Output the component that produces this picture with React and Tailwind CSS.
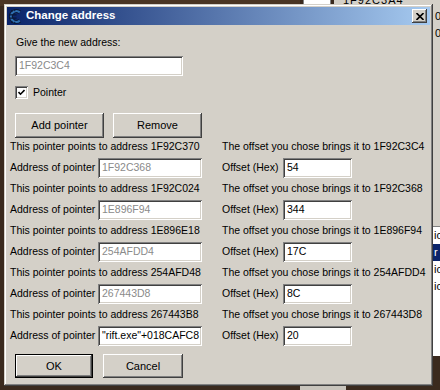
import React from "react";

const rows = [
  { points: "1F92C370", addr: "1F92C368", brings: "1F92C3C4", off: "54" },
  { points: "1F92C024", addr: "1E896F94", brings: "1F92C368", off: "344" },
  { points: "1E896E18", addr: "254AFDD4", brings: "1E896F94", off: "17C" },
  { points: "254AFD48", addr: "267443D8", brings: "254AFDD4", off: "8C" },
  { points: "267443B8", addr: '"rift.exe"+018CAFC8', brings: "267443D8", off: "20", enabled: true },
];

const raised =
  "bg-[#d4d0c8] shadow-[inset_-1px_-1px_#404040,inset_1px_1px_#ffffff,inset_-2px_-2px_#808080,inset_2px_2px_#d4d0c8]";
const sunken =
  "bg-white shadow-[inset_1px_1px_#808080,inset_-1px_-1px_#ffffff,inset_2px_2px_#404040,inset_-2px_-2px_#d4d0c8]";

function Field({ value, disabled, className = "" }) {
  return (
    <div
      className={`${sunken} h-[20px] flex items-center pl-[4px] whitespace-nowrap overflow-hidden ${
        disabled ? "text-[#8a8a8a]" : "text-black"
      } ${className}`}
    >
      {value}
    </div>
  );
}

function Button({ children, className = "" }) {
  return (
    <div className={`${raised} flex items-center justify-center text-black ${className}`}>
      {children}
    </div>
  );
}

export default function App() {
  return (
    <div
      className="relative w-[440px] h-[390px] overflow-hidden bg-[#3a2a1e]"
      style={{ fontFamily: '"Liberation Sans", Arial, sans-serif' }}
    >
      {/* what is behind the dialog */}
      <div className="absolute left-0 top-0 w-[300px] h-[6px] bg-[#4a3524]" />
      <div className="absolute left-[303px] top-0 w-[28px] h-[6px] bg-white border-x border-[#808080]" />
      <div className="absolute left-[334px] top-0 w-[106px] h-[230px] bg-[#d4d0c8]" />
      <div className="absolute left-[343px] top-[-6px] text-[11px] leading-[12px] text-black tracking-[1px]">1F92C3A4</div>
      <div className="absolute left-[435px] top-[10px] text-[11px] leading-[13px] text-black">
        0<br />
        <span className="block mt-[4px]">0</span>
      </div>
      <div className="absolute left-[432px] top-[226px] w-[8px] h-[130px] bg-white border-t border-[#808080] text-[11px] leading-[17px] text-black pl-[2px]">
        io
        <div className="bg-[#0a246a] text-white -ml-[2px] pl-[2px]">r</div>
        io
        <br />
        io
      </div>
      <div className="absolute left-[300px] top-[384px] w-[46px] h-[6px] bg-[#c8c4bc]" />

      {/* dialog */}
      <div
        className="absolute left-[4px] top-[4px] w-[429px] h-[382px] p-[3px] bg-[#d4d0c8] shadow-[inset_-1px_-1px_#404040,inset_1px_1px_#d4d0c8,inset_-2px_-2px_#808080,inset_2px_2px_#ffffff] text-[10.5px] text-black"
      >
        {/* title bar */}
        <div className="h-[18px] flex items-center bg-[linear-gradient(to_right,#0a246a,#a6caf0)] pl-[1px] pr-[3px]">
          <svg width="15" height="15" viewBox="0 0 14 14" className="mr-[3px]">
            <path d="M11 3.2 A5 5 0 1 0 11 10.8" fill="none" stroke="#0b1a3a" strokeWidth="4" />
            <path d="M11 3.2 A5 5 0 1 0 11 10.8" fill="none" stroke="#2f6fb0" strokeWidth="2" />
            <path d="M1 5.5 H8 M1 8.5 H8" stroke="#0b1a3a" strokeWidth="1.2" />
            <path d="M3 1 L4 2.5 M6 0.5 L6.5 2 M3 13 L4 11.5 M6 13.5 L6.5 12" stroke="#0b1a3a" strokeWidth="1" />
          </svg>
          <span className="text-white font-bold text-[11.5px] leading-none">Change address</span>
          <div className="ml-auto w-[15px] h-[14px] flex items-center justify-center bg-[#d4d0c8] shadow-[inset_-1px_-1px_#404040,inset_1px_1px_#ffffff,inset_-2px_-2px_#808080]">
            <svg width="8" height="7" viewBox="0 0 8 7">
              <path d="M0.5 0 L7.5 7 M7.5 0 L0.5 7" stroke="#000" strokeWidth="1.6" />
            </svg>
          </div>
        </div>

        {/* body */}
        <div className="flex flex-col">
          <div className="ml-[9px] mt-[11px] leading-[13px]">Give the new address:</div>
          <Field value="1F92C3C4" disabled className="ml-[8px] mt-[7px] w-[168px]" />

          <div className="ml-[8px] mt-[10px] h-[13px] flex items-center gap-[5px]">
            <div className={`${sunken} w-[13px] h-[13px] flex items-center justify-center`}>
              <svg width="7" height="7" viewBox="0 0 7 7">
                <path d="M0.5 3 L2.5 5.2 L6.5 1" fill="none" stroke="#000" strokeWidth="1.6" />
              </svg>
            </div>
            <span className="leading-[13px]">Pointer</span>
          </div>

          <div className="ml-[8px] mt-[14px] flex gap-[9px] text-[11px]">
            <Button className="w-[89px] h-[25px]">Add pointer</Button>
            <Button className="w-[89px] h-[25px]">Remove</Button>
          </div>

          <div className="ml-[3px] mt-[2px] flex flex-col gap-[4px]">
            {rows.map((r) => (
              <div key={r.points} className="flex">
                <div className="w-[212px] flex flex-col gap-[5px]">
                  <div className="leading-[13px] whitespace-nowrap">This pointer points to address {r.points}</div>
                  <div className="flex items-center">
                    <span className="w-[88px] whitespace-nowrap">Address of pointer</span>
                    <Field value={r.addr} disabled={!r.enabled} className="w-[104px]" />
                  </div>
                </div>
                <div className="flex flex-col gap-[5px]">
                  <div className="leading-[13px] whitespace-nowrap">The offset you chose brings it to {r.brings}</div>
                  <div className="flex items-center">
                    <span className="w-[61px] whitespace-nowrap">Offset (Hex)</span>
                    <Field value={r.off} className="w-[69px]" />
                  </div>
                </div>
              </div>
            ))}
          </div>

          <div className="ml-[8px] mt-[8px] flex gap-[10px] text-[11px]">
            <div className="border border-black">
              <Button className="w-[76px] h-[22px]">OK</Button>
            </div>
            <Button className="w-[80px] h-[24px]">Cancel</Button>
          </div>
        </div>
      </div>
    </div>
  );
}
